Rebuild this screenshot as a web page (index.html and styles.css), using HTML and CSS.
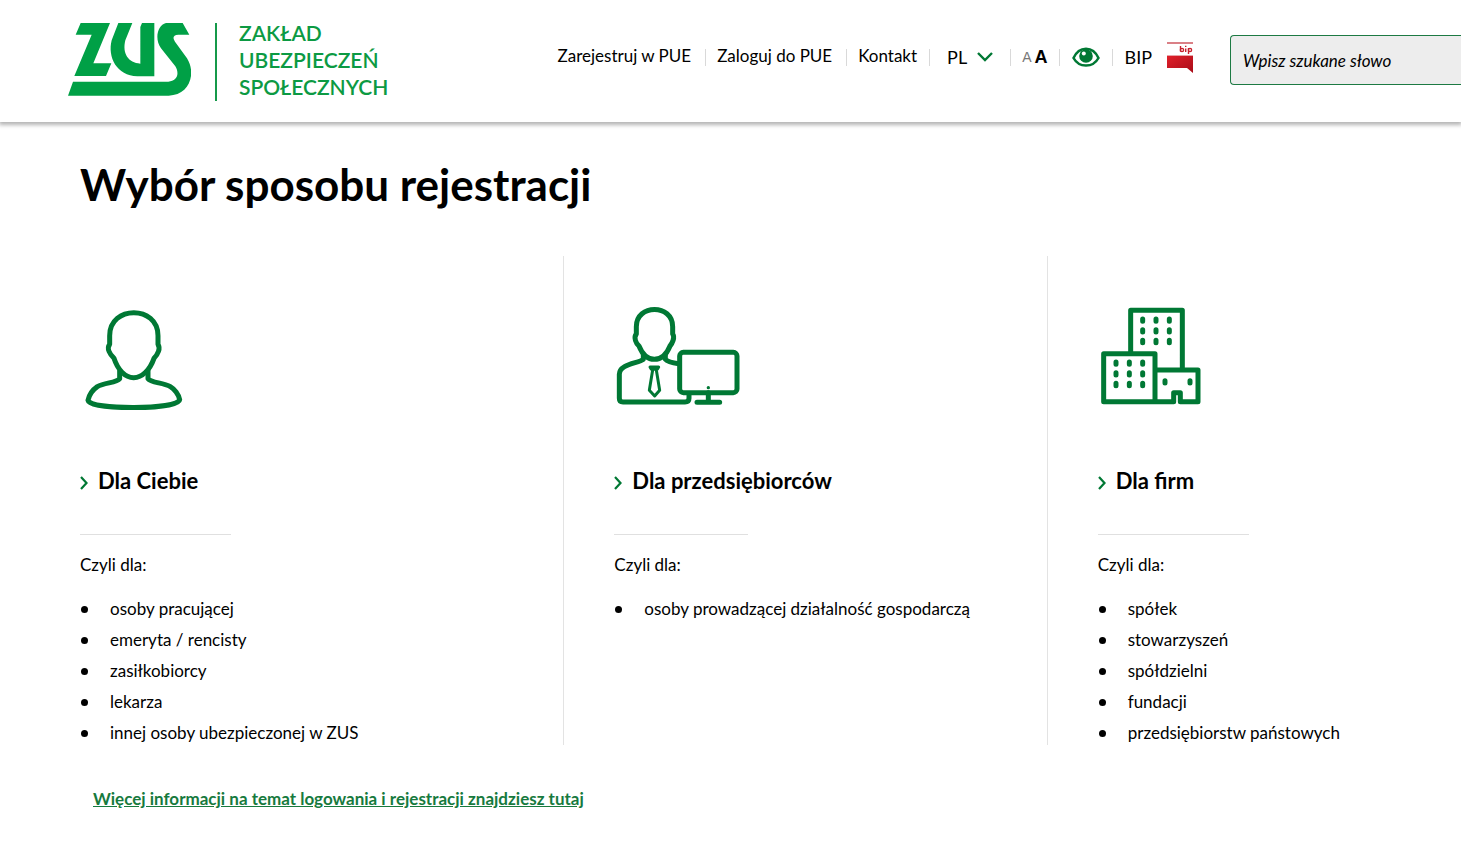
FILE: index.html
```html
<!DOCTYPE html>
<html lang="pl">
<head>
<meta charset="utf-8">
<title>Wybór sposobu rejestracji - ZUS</title>
<link rel="stylesheet" href="styles.css">
</head>
<body>
<header class="header">
  <a class="brand" href="#">
    <span class="brand-logo">
      <svg class="brand-mark" viewBox="54 38 369 219" role="img" aria-label="ZUS">
        <path d="M92 38H180L130 159H184L168 197H73L125 73H77Z"/>
        <path d="M205 38H247L226 90C216 130 235 158 271 160V50L276 38H313V198H262C200 197 172 140 185 90Z"/>
        <path d="M348 38H398L418 73H385C368 73 368 84 375 94L411 144C440 190 418 255 356 256H54L69 214H355C380 212 390 192 376 168L333 114C313 86 322 45 348 38Z"/>
      </svg>
    </span>
    <span class="brand-name">ZAKŁAD<br>UBEZPIECZEŃ<br>SPOŁECZNYCH</span>
  </a>
  <nav class="nav" aria-label="Menu główne">
    <a class="nav-item nav-link" href="#">Zarejestruj w PUE</a>
    <a class="nav-item nav-link" href="#">Zaloguj do PUE</a>
    <a class="nav-item nav-link nav-contact" href="#">Kontakt</a>
    <button class="nav-item nav-lang" type="button">PL
      <svg class="lang-arrow" viewBox="0 0 16 10" aria-hidden="true"><path d="M1 1L8 8L15 1"/></svg>
    </button>
    <span class="nav-item nav-size">
      <button class="size-small" type="button" aria-label="Mniejszy tekst">A</button>
      <button class="size-large" type="button" aria-label="Większy tekst">A</button>
    </span>
    <button class="nav-item nav-eye" type="button" aria-label="Wysoki kontrast">
      <svg class="eye" viewBox="0 0 28 20" aria-hidden="true">
        <path class="eye-line" d="M1.500 11C7 -1.500 21 -1.500 26.500 11C21 21 7 21 1.500 11Z"/>
        <circle class="eye-ball" cx="14" cy="9" r="6.800"/>
        <circle class="eye-glint" cx="11.800" cy="6.500" r="2"/>
      </svg>
    </button>
    <a class="nav-item nav-bip" href="#">BIP
      <svg class="bip" viewBox="0 0 26 31" aria-hidden="true">
        <defs><linearGradient id="bip-red" x1="0" x2="1" y1="0" y2="1"><stop offset="0" stop-color="#e0202a"/><stop offset="1" stop-color="#a80c18"/></linearGradient></defs>
        <path d="M0 1H26" stroke="#c63c44" stroke-width="1.300"/>
        <path d="M0 14H26V31L20 26H0Z" fill="url(#bip-red)"/>
        <path d="M0 13.500H26" stroke="#e7a5a9"/>
        <g fill="none" stroke="#c8202c" stroke-width="1.400"><path d="M13.500 4V9.500"/><circle cx="15" cy="8" r="1.600"/><path d="M18.700 6.500V10M18.700 3.800V5M21.500 6V12"/><circle cx="23" cy="8" r="1.600"/></g>
      </svg>
    </a>
  </nav>
  <form class="search">
    <input class="search-input" type="search" aria-label="Szukaj" placeholder="Wpisz szukane słowo">
  </form>
</header>
<main class="main">
  <h1 class="title">Wybór sposobu rejestracji</h1>
  <div class="columns">
    <section class="column">
      <svg class="icon" viewBox="30 33 390 330" aria-hidden="true">
        <path d="M119 148V122C119 30 264 30 264 122V148C272 160 264 178 252 190C240 224 217 248 191 248C165 248 143 224 132 190C120 178 109 160 119 148Z"/>
        <path d="M149 226V251C139 264 104 262 82 275C66 286 57 302 54 316C58 345 326 345 329 314C326 298 313 282 301 275C279 262 244 264 234 251V226"/>
      </svg>
      <h2 class="heading"><a class="heading-link" href="#"><svg class="arrow" viewBox="0 0 8 14" aria-hidden="true"><path d="M1 1L6.500 7L1 13"/></svg>Dla Ciebie</a></h2>
      <hr class="rule">
      <p class="intro">Czyli dla:</p>
      <ul class="list">
        <li>osoby pracującej</li>
        <li>emeryta / rencisty</li>
        <li>zasiłkobiorcy</li>
        <li>lekarza</li>
        <li>innej osoby ubezpieczonej w ZUS</li>
      </ul>
    </section>
    <section class="column">
      <svg class="icon" viewBox="42 33 390 330" aria-hidden="true">
        <path d="M109 117V95C109 26 218 26 218 95V117C226 127 216 146 210 153C200 178 184 193 163 193C143 193 127 178 117 153C108 146 100 127 109 117Z"/>
        <path d="M130 178V193C116 205 58 206 58 238V310Q58 321 69 321H255Q267 321 267 310V298M196 178V193C203 202 217 204 236 206"/>
        <rect x="239" y="172" width="172" height="121" rx="11"/>
        <path d="M325 293V322M291 322H359" stroke-linecap="round"/>
        <path d="M150 216H176L172 223H154ZM158 225L148 286L164 303L179 286L169 225" stroke-width="9"/>
        <circle class="dot" cx="325" cy="278" r="5"/>
      </svg>
      <h2 class="heading"><a class="heading-link" href="#"><svg class="arrow" viewBox="0 0 8 14" aria-hidden="true"><path d="M1 1L6.500 7L1 13"/></svg>Dla przedsiębiorców</a></h2>
      <hr class="rule rule-short">
      <p class="intro">Czyli dla:</p>
      <ul class="list">
        <li>osoby prowadzącej działalność gospodarczą</li>
      </ul>
    </section>
    <section class="column">
      <svg class="icon" viewBox="24 33 390 330" aria-hidden="true">
        <path d="M122 175V46H277V224M41 176H195V320H41ZM195 225H324V320H271V293H251V320H195"/>
        <path d="M158 72V79M198 72V79M238 72V79M158 104V111M198 104V111M238 104V111M158 136V143M198 136V143M238 136V143M78 201V208M118 201V208M158 201V208M78 233V240M118 233V240M158 233V240M78 265V272M118 265V272M158 265V272M225 257V264M300 257V264" stroke-linecap="round"/>
      </svg>
      <h2 class="heading"><a class="heading-link" href="#"><svg class="arrow" viewBox="0 0 8 14" aria-hidden="true"><path d="M1 1L6.500 7L1 13"/></svg>Dla firm</a></h2>
      <hr class="rule">
      <p class="intro">Czyli dla:</p>
      <ul class="list">
        <li>spółek</li>
        <li>stowarzyszeń</li>
        <li>spółdzielni</li>
        <li>fundacji</li>
        <li>przedsiębiorstw państowych</li>
      </ul>
    </section>
  </div>
  <a class="more" href="#">Więcej informacji na temat logowania i rejestracji znajdziesz tutaj</a>
</main>
</body>
</html>
```
FILE: styles.css
```css
* { box-sizing: border-box; }
body {
  margin: 0;
  background: #fff;
  color: #000;
  font: 17px/24px Lato, "Noto Sans", sans-serif;
}
a { color: inherit; text-decoration: none; }
button {
  border: 0;
  padding: 0;
  background: none;
  color: inherit;
  font: inherit;
  cursor: pointer;
}
.header {
  display: flex;
  justify-content: space-between;
  align-items: flex-end;
  padding: 19px 0 21px 68px;
  box-shadow: 0 2px 4px 1px #b4b4b4;
}
.brand { display: flex; align-items: flex-end; flex: none; color: #0c9a43; }
.brand-logo {
  height: 78px;
  padding-right: 24px;
  border-right: 2px solid #15994a;
}
.brand-mark { display: block; width: 123px; height: 73px; fill: #00a046; }
.brand-name {
  height: 82px;
  padding-left: 22px;
  font-size: 21px;
  font-weight: 600;
  line-height: 27px;
}
.nav { display: flex; align-items: center; flex: none; height: 68px; margin: 0 0 10px auto; }
.nav-item {
  display: flex;
  align-items: center;
  height: 17px;
  padding: 0 12px;
  border-left: 1px solid #d9d9d9;
}
.nav-item:first-child { border-left: 0; }
.nav-link { padding: 0 14px 3px 11px; }
.nav-contact { padding-right: 12px; }
.nav-lang { gap: 10px; padding: 0 17px; font-size: 18px; }
.lang-arrow { width: 16px; height: 10px; fill: none; stroke: #007834; stroke-width: 2.4; }
.nav-size { gap: 3px; padding: 0 11px; font-family: "Liberation Sans", sans-serif; }
.size-small { color: #777; font-size: 14px; -webkit-text-stroke: 0; }
.size-large { font-size: 18px; font-weight: 700; }
.eye { width: 28px; height: 20px; }
.eye-line { fill: none; stroke: #007834; stroke-width: 2.5; }
.eye-ball { fill: #007834; }
.eye-glint { fill: #fff; }
.nav-bip { gap: 15px; padding-right: 0; font-size: 18px; }
.bip { width: 26px; height: 31px; }
.search { flex: none; width: 231px; margin: 0 0 16px 37px; }
.search-input {
  display: block;
  width: 100%;
  height: 50px;
  padding: 0 12px;
  border: 1px solid #1d7a43;
  border-right: 0;
  border-radius: 4px 0 0 4px;
  background: #ededed;
  font: italic 17px/24px Lato, "Noto Sans", sans-serif;
}
.search-input::placeholder { color: #000; opacity: 1; }
.main { padding: 34px 0 32px 80px; }
.title { margin: 0 0 44px; font-size: 44px; font-weight: 700; line-height: 56px; }
.columns { display: grid; grid-template-columns: 35% 35% 30%; }
.column { padding: 50px 0 0 50px; border-left: 1px solid #e3e3e3; }
.column:first-child { padding-left: 0; border-left: 0; }
.icon {
  display: block;
  width: 130px;
  height: 110px;
  fill: none;
  stroke: #007834;
  stroke-width: 15;
  stroke-linejoin: round;
}
.icon .dot { fill: #007834; stroke: none; }
.heading { margin: 50px 0 37px; font-size: 22px; font-weight: 700; line-height: 30px; }
.heading-link { display: inline-flex; align-items: center; gap: 10px; }
.arrow { width: 8px; height: 14px; margin-top: 4px; fill: none; stroke: #007834; stroke-width: 2.2; }
.rule { width: 151px; height: 1px; margin: 0 0 18px; border: 0; background: #e0e0e0; }
.rule-short { width: 134px; }
.intro { margin: 0 0 20px; }
.list { display: grid; gap: 7px; margin: 0; padding: 0; list-style: none; }
.list li { display: flex; align-items: center; }
.list li::before {
  content: "";
  width: 7px;
  height: 7px;
  margin: 0 22px 0 1px;
  border-radius: 50%;
  background: #000;
}
.more {
  display: inline-block;
  margin: 42px 0 0 13px;
  color: #177a3e;
  font-weight: 700;
  text-decoration: underline;
}
```
